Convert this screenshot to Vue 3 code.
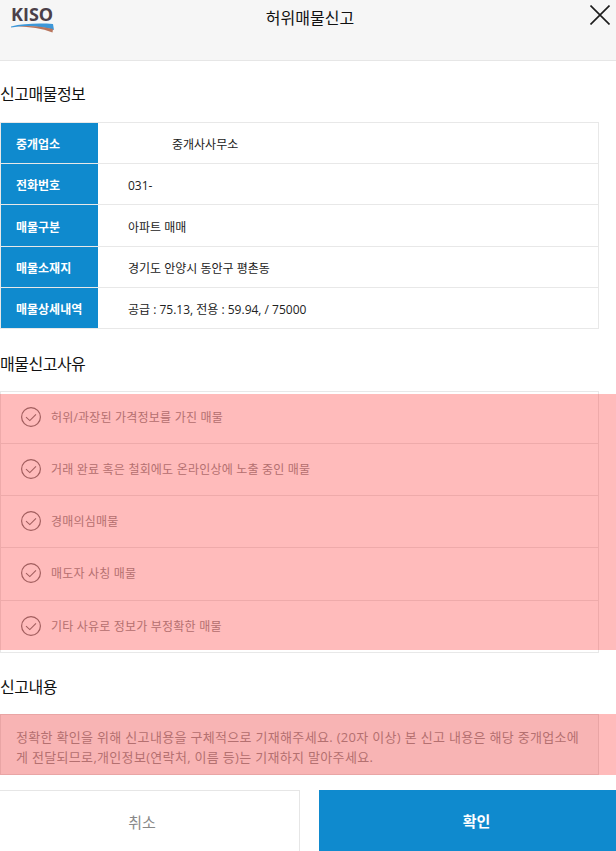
<template>
  <div class="page">
    <header class="top">
      <div class="logo">
        <span class="logo-text">KISO</span>
        <svg class="swoosh" width="44" height="10" viewBox="0 0 44 10">
          <path d="M0 3.5 C12 0.5 28 0 42 1 L43 7 C30 3 14 2.5 0 4.5 Z" fill="#3d97d8" />
          <path d="M6 3.6 C18 2.4 30 3.2 42 6 L41.5 9.5 C31 5.6 19 3.8 6 3.6 Z" fill="#b8745c" />
        </svg>
      </div>
      <h1 class="title">허위매물신고</h1>
      <button class="close" type="button" aria-label="닫기">
        <svg width="20" height="20" viewBox="0 0 20 20">
          <path d="M0.5 0.5 L19.5 19.5 M19.5 0.5 L0.5 19.5" stroke="#1c1c1c" stroke-width="1.6" fill="none" />
        </svg>
      </button>
    </header>

    <h2 class="heading first">신고매물정보</h2>
    <div class="info">
      <div v-for="row in rows" :key="row.label" class="info-row">
        <div class="info-label">{{ row.label }}</div>
        <div class="info-value" :class="{ indent: row.indent }">{{ row.value }}</div>
      </div>
    </div>

    <h2 class="heading second">매물신고사유</h2>
    <div class="reason-wrap">
      <ul class="reasons">
        <li v-for="reason in reasons" :key="reason" class="reason">
          <svg width="20" height="20" viewBox="0 0 20 20">
            <circle cx="10" cy="10" r="9.4" fill="none" stroke="#808080" stroke-width="1.2" />
            <path d="M5 10.2 L8.8 13.6 L15 7.4" fill="none" stroke="#808080" stroke-width="1.1" />
          </svg>
          <span>{{ reason }}</span>
        </li>
      </ul>
      <div class="mask mask-list"></div>
    </div>

    <h2 class="heading third">신고내용</h2>
    <div class="memo-wrap">
      <div class="memo">정확한 확인을 위해 신고내용을 구체적으로 기재해주세요. (20자 이상) 본 신고 내용은 해당 중개업소에 게 전달되므로,개인정보(연락처, 이름 등)는 기재하지 말아주세요.</div>
      <div class="mask"></div>
    </div>

    <div class="actions">
      <button class="btn cancel" type="button">취소</button>
      <button class="btn ok" type="button">확인</button>
    </div>
  </div>
</template>

<script setup>
const rows = [
  { label: '중개업소', value: '중개사사무소', indent: true },
  { label: '전화번호', value: '031-' },
  { label: '매물구분', value: '아파트 매매' },
  { label: '매물소재지', value: '경기도 안양시 동안구 평촌동' },
  { label: '매물상세내역', value: '공급 : 75.13, 전용 : 59.94, / 75000' }
]

const reasons = [
  '허위/과장된 가격정보를 가진 매물',
  '거래 완료 혹은 철회에도 온라인상에 노출 중인 매물',
  '경매의심매물',
  '매도자 사칭 매물',
  '기타 사유로 정보가 부정확한 매물'
]
</script>

<style>
html, body {
  margin: 0;
  background: #fff;
}
</style>

<style scoped>
.page {
  width: 616px;
  height: 851px;
  overflow: hidden;
  font-family: "Open Sans", "Noto Sans CJK KR", sans-serif;
  color: #222;
}

/* 상단 */
.top {
  position: relative;
  height: 60px;
  box-sizing: content-box;
  background: #f6f6f6;
  border-bottom: 1px solid #e6e6e6;
}

.logo {
  position: absolute;
  left: 11px;
  top: 4px;
  display: flex;
  flex-direction: column;
}

.logo-text {
  font-size: 18px;
  line-height: 20px;
  font-weight: 700;
  color: #4b4049;
}

.swoosh {
  display: block;
  margin-top: -1px;
}

.title {
  margin: 0;
  padding-left: 4px;
  font-size: 16px;
  font-weight: 400;
  line-height: 36px;
  text-align: center;
  color: #111;
}

.close {
  position: absolute;
  right: 6px;
  top: 5px;
  padding: 0;
  border: none;
  background: none;
  line-height: 0;
}

/* 제목 */
.heading {
  margin: 0 0 16px;
  font-size: 16px;
  font-weight: 400;
  line-height: 22px;
  letter-spacing: -0.5px;
  color: #111;
}

.first {
  margin-top: 22px;
  margin-bottom: 17px;
}

.second {
  margin-top: 24px;
}

.third {
  margin-top: 23px;
}

/* 매물정보 */
.info {
  width: 599px;
  box-sizing: border-box;
  border: 1px solid #e8e8e8;
}

.info-row {
  display: flex;
  box-sizing: border-box;
  height: 41px;
  border-bottom: 1px solid #e8e8e8;
  font-size: 12px;
}

.info-row:nth-child(3) {
  height: 42px;
}

.info-row:last-child {
  height: 40px;
  border-bottom: none;
}

.info-label {
  width: 97px;
  padding: 2px 0 0 15px;
  box-sizing: border-box;
  display: flex;
  align-items: center;
  background: #0f8ace;
  color: #fff;
  font-weight: 700;
}

.info-value {
  padding: 2px 0 0 30px;
  display: flex;
  align-items: center;
  color: #222;
}

.indent {
  padding-left: 74px;
}

/* 신고사유 */
.reason-wrap,
.memo-wrap {
  position: relative;
}

.reasons {
  width: 599px;
  box-sizing: border-box;
  margin: 0;
  padding: 0;
  list-style: none;
  border: 1px solid #e8e8e8;
}

.reason {
  height: 52px;
  padding: 0 0 2px 20px;
  box-sizing: border-box;
  display: flex;
  align-items: center;
  gap: 10px;
  border-bottom: 1px solid #e8e8e8;
  font-size: 12px;
  letter-spacing: 0.2px;
  color: #999;
}

.reason:nth-child(4) {
  height: 53px;
}

.reason:last-child {
  height: 51px;
  border-bottom: none;
}

.mask {
  position: absolute;
  inset: 0;
  width: 616px;
  background: rgba(255, 0, 0, 0.267);
}

.mask-list {
  top: 3px;
  bottom: 3px;
}

/* 신고내용 */
.memo {
  width: 599px;
  height: 61px;
  box-sizing: border-box;
  padding: 12px 15px;
  background: #f6f6f6;
  border: 1px solid #e2e2e2;
  font-size: 13px;
  line-height: 20px;
  letter-spacing: 0.32px;
  color: #999;
}

/* 하단 버튼 */
.actions {
  display: flex;
  justify-content: space-between;
  margin-top: 15px;
}

.btn {
  height: 61px;
  font-family: inherit;
  font-size: 15px;
}

.cancel {
  width: 300px;
  padding-right: 21px;
  background: #fff;
  border: 1px solid #e6e6e6;
  border-left: none;
  border-bottom: none;
  color: #888;
}

.ok {
  width: 297px;
  padding-left: 24px;
  background: #0f8ace;
  border: none;
  color: #fff;
  font-weight: 700;
}
</style>
